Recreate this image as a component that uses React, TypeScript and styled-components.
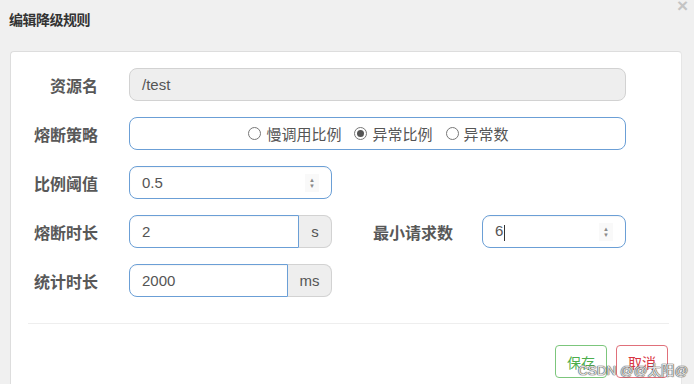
import React from 'react';
import styled, { createGlobalStyle } from 'styled-components';

const GlobalStyle = createGlobalStyle`
  html, body {
    margin: 0;
    padding: 0;
    background: #f0f0f0;
    font-family: "Liberation Sans", Arial, "Noto Sans CJK SC", sans-serif;
  }
`;

const Page = styled.div`
  position: relative;
  width: 694px;
  height: 384px;
  overflow: hidden;
  background: #f0f0f0;
`;

const Header = styled.div`
  height: 51px;
  padding-left: 9px;
  display: flex;
  align-items: flex-start;
`;

const Title = styled.h4`
  margin: 9px 0 0;
  font-size: 14px;
  font-weight: bold;
  color: #333;
  letter-spacing: -0.5px;
`;

const Close = styled.span`
  position: absolute;
  top: -4px;
  right: 6px;
  font-size: 19px;
  font-weight: bold;
  color: #c4c4c4;
  line-height: 1;
`;

const Panel = styled.div`
  margin-left: 10px;
  width: 672px;
  height: 340px;
  background: #fff;
  border: 1px solid #ddd;
  border-bottom: none;
  border-right-color: #e6e6e6;
  border-radius: 4px 4px 0 0;
  padding-top: 16px;
  box-sizing: border-box;
`;

const Form = styled.div`
  display: flex;
  flex-direction: column;
  gap: 16px;
`;

const Row = styled.div`
  display: flex;
  align-items: center;
  height: 33px;
`;

const Label = styled.label<{ $w?: number }>`
  width: ${p => p.$w ?? 87}px;
  text-align: right;
  font-size: 16px;
  font-weight: bold;
  color: #585858;
  flex-shrink: 0;
`;

const Field = styled.div<{ $w: number; $ml?: number }>`
  width: ${p => p.$w}px;
  margin-left: ${p => p.$ml ?? 31}px;
  height: 33px;
  display: flex;
  flex-shrink: 0;
`;

const Input = styled.div<{ $disabled?: boolean; $joined?: boolean }>`
  flex: 1;
  display: flex;
  align-items: center;
  justify-content: space-between;
  box-sizing: border-box;
  height: 33px;
  padding: 0 12px;
  font-size: 15px;
  color: #555;
  background: ${p => (p.$disabled ? '#eeeeee' : '#fff')};
  border: 1px solid ${p => (p.$disabled ? '#d2d2d2' : '#6b9fd6')};
  border-radius: ${p => (p.$joined ? '8px 0 0 8px' : '8px')};
  box-shadow: ${p => (p.$disabled ? 'none' : 'inset 0 1px 1px rgba(0,0,0,0.04)')};
`;

const Addon = styled.div<{ $w: number }>`
  width: ${p => p.$w}px;
  box-sizing: border-box;
  display: flex;
  align-items: center;
  justify-content: center;
  background: #eee;
  border: 1px solid #d2d2d2;
  border-left: none;
  border-radius: 0 8px 8px 0;
  font-size: 15px;
  color: #555;
`;

const Spinner = styled.span`
  display: flex;
  flex-direction: column;
  align-items: center;
  justify-content: center;
  width: 14px;
  height: 18px;
  background: #f9f9f9;
  color: #8a8a8a;
  font-size: 6px;
  line-height: 6px;
`;

const Caret = styled.span`
  display: inline-block;
  width: 1px;
  height: 16px;
  background: #333;
  margin-left: 1px;
  vertical-align: middle;
`;

const RadioBox = styled.div`
  flex: 1;
  box-sizing: border-box;
  display: flex;
  align-items: center;
  justify-content: center;
  gap: 13px;
  padding-left: 2px;
  border: 1px solid #6b9fd6;
  border-radius: 8px;
`;

const RadioItem = styled.span`
  display: flex;
  align-items: center;
  gap: 5px;
  font-size: 15px;
  color: #555;
`;

const Dot = styled.span<{ $on?: boolean }>`
  width: 11px;
  height: 11px;
  border-radius: 50%;
  border: 1px solid #777;
  background: #fff;
  position: relative;
  &::after {
    content: '';
    display: ${p => (p.$on ? 'block' : 'none')};
    position: absolute;
    top: 2px;
    left: 2px;
    width: 7px;
    height: 7px;
    border-radius: 50%;
    background: #555;
  }
`;

const Divider = styled.div`
  margin: 26px 0 0 17px;
  width: 641px;
  height: 1px;
  background: #eeeeee;
`;

const Footer = styled.div`
  display: flex;
  justify-content: flex-end;
  gap: 9px;
  margin-top: 21px;
  padding-right: 13px;
`;

const Btn = styled.button<{ $c: string; $b: string }>`
  width: 52px;
  height: 33px;
  background: #fff;
  border: 1px solid ${p => p.$b};
  border-radius: 4px;
  color: ${p => p.$c};
  font-size: 14px;
  font-family: inherit;
  padding: 0;
`;

const Watermark = styled.span`
  position: absolute;
  left: 578px;
  top: 359px;
  font-size: 13.5px;
  color: rgba(245, 245, 245, 0.9);
  text-shadow: 0 0 1px #555, 0 0 1px #555, 0 0 1px #555;
  white-space: nowrap;
`;

const Arrows = () => (
  <Spinner>
    <span>▲</span>
    <span>▼</span>
  </Spinner>
);

export default function App() {
  return (
    <Page>
      <GlobalStyle />
      <Header>
        <Title>编辑降级规则</Title>
      </Header>
      <Close>×</Close>
      <Panel>
        <Form>
          <Row>
            <Label>资源名</Label>
            <Field $w={497}>
              <Input $disabled>/test</Input>
            </Field>
          </Row>
          <Row>
            <Label>熔断策略</Label>
            <Field $w={497}>
              <RadioBox>
                <RadioItem><Dot />慢调用比例</RadioItem>
                <RadioItem><Dot $on />异常比例</RadioItem>
                <RadioItem><Dot />异常数</RadioItem>
              </RadioBox>
            </Field>
          </Row>
          <Row>
            <Label>比例阈值</Label>
            <Field $w={203}>
              <Input>0.5<Arrows /></Input>
            </Field>
          </Row>
          <Row>
            <Label>熔断时长</Label>
            <Field $w={203}>
              <Input $joined>2</Input>
              <Addon $w={33}>s</Addon>
            </Field>
            <Label $w={121}>最小请求数</Label>
            <Field $w={144} $ml={29}>
              <Input><span>6<Caret /></span><Arrows /></Input>
            </Field>
          </Row>
          <Row>
            <Label>统计时长</Label>
            <Field $w={203}>
              <Input $joined>2000</Input>
              <Addon $w={44}>ms</Addon>
            </Field>
          </Row>
        </Form>
        <Divider />
        <Footer>
          <Btn $c="#4cae4c" $b="#7cc67c">保存</Btn>
          <Btn $c="#d9343f" $b="#e0707a">取消</Btn>
        </Footer>
      </Panel>
      <Watermark>CSDN @@太阳@</Watermark>
    </Page>
  );
}
